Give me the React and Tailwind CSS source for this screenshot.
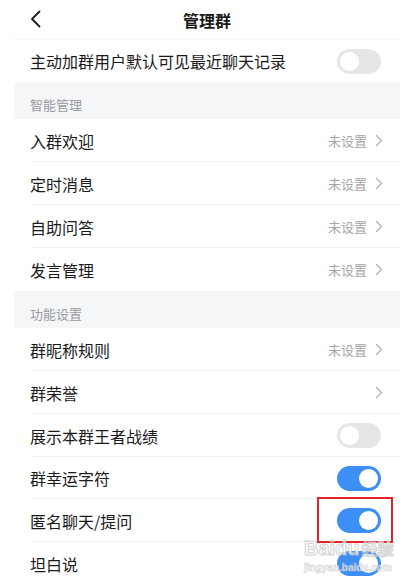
import React from "react";

const font = { fontFamily: '"Noto Sans CJK SC", "Noto Sans", sans-serif' };

function Toggle({ on }) {
    return (
        <div className={`w-[44px] h-[25px] rounded-full flex items-center px-[3px] ${on ? "bg-[#3d8ff5] justify-end" : "bg-[#e6e6e8] justify-start"}`}>
            <div className="w-[19px] h-[19px] rounded-full bg-white" />
        </div>
    );
}

function Chevron() {
    return (
        <svg width="8" height="13" viewBox="0 0 8 13" className="ml-[8px] mr-[-2px]">
            <path d="M1.5 1.5 L6.5 6.5 L1.5 11.5" fill="none" stroke="#b3b3b3" strokeWidth="1.4" strokeLinecap="round" strokeLinejoin="round" />
        </svg>
    );
}

function Row({ label, value, chevron, toggle, last, h = "h-[43px]" }) {
    return (
        <div className={`relative flex items-center justify-between ${h} pl-[16px] pr-[19px]`}>
            <span className="text-[16px] text-[#1a1a1a]">{label}</span>
            <div className="flex items-center">
                {value && <span className="text-[13px] text-[#a6a6a6]">{value}</span>}
                {chevron && <Chevron />}
                {toggle !== undefined && <Toggle on={toggle} />}
            </div>
            {!last && <div className="absolute bottom-0 left-[18px] right-0 h-px bg-[#f1f1f3]" />}
        </div>
    );
}

function Section({ title }) {
    return (
        <div className="h-[37px] bg-[#f5f6f8] flex items-end pb-[5px] pl-[16px]">
            <span className="text-[13px] text-[#999aa0]">{title}</span>
        </div>
    );
}

export default function App() {
    return (
        <div className="relative w-[420px] h-[580px] bg-white overflow-hidden" style={font}>
            <div className="ml-[14px] w-[386px]">
                <div className="relative h-[40px] flex items-center justify-center border-b border-[#f3f3f5]">
                    <svg width="12" height="18" viewBox="0 0 12 18" className="absolute left-[16px] top-[10px]">
                        <path d="M9.5 1.5 L2 9 L9.5 16.5" fill="none" stroke="#1a1a1a" strokeWidth="1.8" strokeLinecap="round" strokeLinejoin="round" />
                    </svg>
                    <span className="text-[16px] font-bold text-[#1a1a1a]">管理群</span>
                </div>
                <Row label="主动加群用户默认可见最近聊天记录" toggle={false} last h="h-[42px]" />
                <Section title="智能管理" />
                <Row label="入群欢迎" value="未设置" chevron />
                <Row label="定时消息" value="未设置" chevron />
                <Row label="自助问答" value="未设置" chevron />
                <Row label="发言管理" value="未设置" chevron last />
                <Section title="功能设置" />
                <Row label="群昵称规则" value="未设置" chevron />
                <Row label="群荣誉" chevron />
                <Row label="展示本群王者战绩" toggle={false} />
                <Row label="群幸运字符" toggle={true} h="h-[42px]" />
                <Row label="匿名聊天/提问" toggle={true} />
                <Row label="坦白说" toggle={true} last />
            </div>

            <div className="absolute left-[317px] top-[497px] w-[76px] h-[46px] border-[2.5px] border-[#e8202a]" />

            <div className="absolute left-[304px] top-[538px] flex flex-col items-start leading-none opacity-80">
                <div className="flex items-end font-bold text-white [-webkit-text-stroke:1px_#c8c8c8]" style={{ fontFamily: '"Liberation Sans", "Noto Sans CJK SC", sans-serif' }}>
                    <span className="text-[20px]">Baidu</span>
                    <span className="text-[16px] ml-[2px]">经验</span>
                </div>
                <span className="mt-[5px] text-[10px] font-bold text-white [-webkit-text-stroke:0.6px_#c8c8c8]" style={{ fontFamily: '"Liberation Sans", sans-serif' }}>jingyan.baidu.com</span>
            </div>
        </div>
    );
}
